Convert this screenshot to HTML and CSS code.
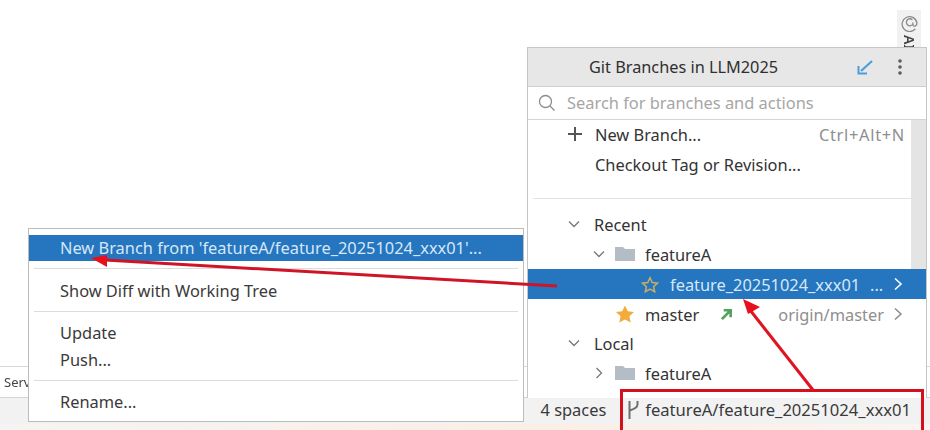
FILE: index.html
```html
<!DOCTYPE html>
<html lang="en">
<head>
<meta charset="utf-8">
<title>Git Branches</title>
<link rel="stylesheet" href="styles.css">
</head>
<body>
<div class="screen">
  <main class="editor">
    <aside class="ai-tab">
      <svg class="ai-icon" width="17" height="17" viewBox="0 0 16 16" fill="none" stroke="#8a8a8a" stroke-width="1.2"><path d="M13.500 13A7 7 0 1 1 15 7.500c0 2.500-2 3.500-3.200 2.800-1-.6-.6-2-.6-3.300"/><path d="M11.200 8.500a3.300 3.300 0 1 1-.5-4"/></svg>
      <span class="ai-label">AI</span>
    </aside>
  </main>
  <div class="tool-row"><span class="tool-tab">Services</span></div>
  <footer class="status-bar">
    <span class="status-item">4 spaces</span>
    <span class="status-item branch-item">
      <svg width="14" height="20" viewBox="0 0 14 20" fill="none" stroke="#6e6e6e" stroke-width="2"><path d="M3.500 1v18"/><path d="M11.500 1v3.500c0 3-3 4.500-8 6"/></svg>
      featureA/feature_20251024_xxx01
    </span>
  </footer>
  <div class="bottom-strip"></div>

  <section class="branches">
    <header class="branches-head">
      <h1 class="branches-title">Git Branches in LLM2025</h1>
      <svg class="head-fetch" width="18" height="18" viewBox="0 0 18 18" fill="none" stroke="#4a9fd8" stroke-width="2.200"><path d="M16 3 5 13"/><path d="M2.500 8v7.500H11" stroke-width="2"/></svg>
      <svg class="head-more" width="4" height="18" viewBox="0 0 4 18" fill="#5c5c5c"><circle cx="2" cy="3" r="1.800"/><circle cx="2" cy="9" r="1.800"/><circle cx="2" cy="15" r="1.800"/></svg>
    </header>
    <div class="search">
      <svg width="18" height="18" viewBox="0 0 18 18" fill="none" stroke="#8c8c8c" stroke-width="1.300"><circle cx="7.500" cy="7.500" r="6"/><path d="m12 12 4.500 4.500"/></svg>
      <span>Search for branches and actions</span>
    </div>
    <div class="list">
      <div class="scroll-thumb"></div>
      <div class="row action">
        <svg class="plus" width="14" height="14" viewBox="0 0 14 14" stroke="#555" stroke-width="2"><path d="M7 0v14M0 7h14"/></svg>
        <span>New Branch...</span><span class="shortcut">Ctrl+Alt+N</span>
      </div>
      <div class="row action"><span class="no-icon">Checkout Tag or Revision...</span></div>
      <div class="list-sep"></div>
      <div class="row group">
        <svg class="chev" width="12" height="12" viewBox="0 0 12 12" fill="none" stroke="#777" stroke-width="1.300"><path d="m1 3.500 5 5 5-5"/></svg>
        <span>Recent</span>
      </div>
      <div class="row folder">
        <svg class="chev" width="12" height="12" viewBox="0 0 12 12" fill="none" stroke="#777" stroke-width="1.300"><path d="m1 3.500 5 5 5-5"/></svg>
        <svg class="dir" width="20" height="16" viewBox="0 0 20 16" fill="#b4bcc6"><path d="M0 1h8l2 2h10v12H0z"/></svg>
        <span>featureA</span>
      </div>
      <div class="row branch selected">
        <svg class="star" width="18" height="17" viewBox="0 0 20 18" fill="none" stroke="#c9ad66" stroke-width="1.700"><path d="m10 1.500 2.500 5.300 5.800.7-4.300 3.900 1.200 5.700L10 14.200l-5.200 2.900L6 11.400 1.700 7.500l5.800-.7z"/></svg>
        <span class="branch-name">feature_20251024_xxx01</span>
        <span class="ellipsis">...</span>
        <svg class="next" width="10" height="14" viewBox="0 0 10 14" fill="none" stroke="#fff" stroke-width="1.600"><path d="m2 1.500 6 5.500-6 5.500"/></svg>
      </div>
      <div class="row branch master">
        <svg class="star" width="20" height="18" viewBox="0 0 20 18" fill="#f2ab3c"><path d="m10 .5 2.800 5.800 6.200.8-4.600 4.200 1.300 6.200L10 14.400l-5.700 3.100 1.300-6.200L1 7.100l6.200-.8z"/></svg>
        <span class="branch-name">master</span>
        <svg class="outgoing" width="13" height="13" viewBox="0 0 14 14" fill="none" stroke="#4fa35c" stroke-width="2.800"><path d="M2 12 11 3M4 2.500h7.500V10"/></svg>
        <span class="remote">origin/master</span>
        <svg class="next" width="10" height="14" viewBox="0 0 10 14" fill="none" stroke="#8a8a8a" stroke-width="1.500"><path d="m2 1.500 6 5.500-6 5.500"/></svg>
      </div>
      <div class="row group local">
        <svg class="chev" width="12" height="12" viewBox="0 0 12 12" fill="none" stroke="#777" stroke-width="1.300"><path d="m1 3.500 5 5 5-5"/></svg>
        <span>Local</span>
      </div>
      <div class="row folder">
        <svg class="chev" width="12" height="12" viewBox="0 0 12 12" fill="none" stroke="#777" stroke-width="1.300"><path d="m3.500 1 5 5-5 5"/></svg>
        <svg class="dir" width="20" height="16" viewBox="0 0 20 16" fill="#b4bcc6"><path d="M0 1h8l2 2h10v12H0z"/></svg>
        <span>featureA</span>
      </div>
    </div>
  </section>

  <nav class="menu">
    <div class="menu-item active">New Branch from 'featureA/feature_20251024_xxx01'...</div>
    <div class="menu-sep sep-a"></div>
    <div class="menu-item">Show Diff with Working Tree</div>
    <div class="menu-sep sep-b"></div>
    <div class="menu-item tight">Update</div>
    <div class="menu-item tight">Push...</div>
    <div class="menu-sep sep-c"></div>
    <div class="menu-item">Rename...</div>
  </nav>

  <div class="red-box"></div>
  <svg class="arrows" width="930" height="430" viewBox="0 0 930 430" fill="none">
    <path d="M557 286 105 260" stroke="#cf1426" stroke-width="3"/>
    <path d="m91 258 16-3 0 12z" fill="#e8101c"/>
    <path d="M813 390 750 310" stroke="#e01420" stroke-width="3"/>
    <path d="m743 299 5 15 12-7z" fill="#e8101c"/>
  </svg>
</div>
</body>
</html>
```
FILE: styles.css
```css
* { box-sizing: border-box; }
html, body { margin: 0; padding: 0; }
body {
  width: 930px;
  height: 430px;
  overflow: hidden;
  background: #fff;
  font-family: "Noto Sans", "Liberation Sans", sans-serif;
  font-size: 16.4px;
  color: #333;
}
svg { display: block; flex: none; }

.screen {
  position: relative;
  width: 930px;
  height: 430px;
  display: flex;
  flex-direction: column;
  overflow: hidden;
  filter: blur(0.35px);
}
.editor { flex: 1; display: flex; justify-content: flex-end; padding: 10px 9px 0 0; }
.ai-tab {
  width: 24px;
  height: 40px;
  background: #f1f1f1;
  display: flex;
  flex-direction: column;
  align-items: center;
  gap: 3px;
  padding-top: 5px;
}
.ai-label { writing-mode: vertical-rl; font-size: 14px; font-weight: 600; line-height: 14px; color: #444; }

.tool-row { height: 31px; background: #fff; border-top: 1px solid #d8d8d8; }
.tool-tab { display: block; width: 60px; padding: 6px 0 0 4px; font-size: 13px; line-height: 18px; color: #444; overflow: hidden; }
.status-bar {
  height: 27px;
  background: #f2f2f2;
  border-top: 1px solid #d4d4d4;
  display: flex;
  justify-content: flex-end;
  align-items: center;
  padding: 0 19px 3px 0;
  color: #3a3a3a;
}
.status-item { display: flex; align-items: center; white-space: nowrap; }
.branch-item { gap: 5px; margin-left: 20px; font-size: 16.6px; }
.bottom-strip { height: 6px; background: linear-gradient(90deg, #f6f4f2, #fbeee4 55%, #fbf4f0); }

.branches {
  position: absolute;
  left: 527px;
  top: 47px;
  width: 400px;
  height: 351px;
  background: #fff;
  border: 1px solid #c6c6c6;
  border-bottom: 0;
  display: flex;
  flex-direction: column;
}
.branches-head {
  height: 39px;
  flex: none;
  background: #e7e7e7;
  display: flex;
  align-items: center;
  padding: 0 24px 0 61px;
  border-bottom: 1px solid #d0d0d0;
}
.branches-title { margin: 0; flex: 1; font-size: 16.3px; font-weight: 400; color: #2f2f2f; white-space: nowrap; }
.head-fetch { margin-right: 24px; margin-left: -4px; }
.search {
  height: 33px;
  flex: none;
  display: flex;
  align-items: center;
  gap: 11px;
  padding: 0 0 1px 10px;
  border-bottom: 1px solid #d4d4d4;
  color: #a6a6a6;
}
.list { position: relative; flex: 1; margin-top: -1px; }
.scroll-thumb { position: absolute; right: 0; top: 1px; width: 15px; height: 149px; background: #e4e4e4; }
.row { position: relative; height: 30px; display: flex; align-items: center; white-space: nowrap; color: #333; }
.action { padding-left: 40px; }
.plus { margin-right: 13px; }
.no-icon { margin-left: 27px; }
.shortcut { position: absolute; right: 21px; color: #8e8e8e; letter-spacing: 0.7px; }
.list-sep { height: 1px; margin: 19px 7px 10px 5px; background: #e3e3e3; }
.group { padding-left: 40px; gap: 14px; }
.local { margin-top: -1px; }
.folder { padding-left: 65px; gap: 10px; }
.selected { background: #2675bf; color: #d5e8f7; }
.branch { padding-left: 113px; }
.selected .star { margin-right: 11px; }
.selected .branch-name { width: 200px; }
.ellipsis { width: 26px; }
.next { position: absolute; right: 23px; top: 8px; }
.master { padding-left: 87px; }
.master .star { margin-right: 10px; }
.outgoing { margin-left: 21px; }
.remote { position: absolute; right: 42px; color: #8e8e8e; }

.menu {
  position: absolute;
  left: 28px;
  top: 228px;
  width: 496px;
  height: 194px;
  background: #fff;
  border: 1px solid #bcbcbc;
  padding-top: 6px;
}
.menu-item { height: 26px; padding-left: 31px; line-height: 26px; white-space: nowrap; color: #3a3a3a; }
.menu-item.active { background: #2675bf; color: #d5e8f7; }
.menu-item.tight { height: 27px; line-height: 27px; }
.menu-sep { height: 1px; margin: 7px 5px; background: #dcdcdc; }
.sep-a { margin-bottom: 9px; }
.sep-b { margin: 7px 5px; }
.sep-c { margin: 7px 5px 8px; }

.red-box {
  position: absolute;
  left: 620px;
  top: 389px;
  width: 304px;
  height: 50px;
  border: 3px solid #d5101c;
}
.arrows { position: absolute; left: 0; top: 0; pointer-events: none; }
```
